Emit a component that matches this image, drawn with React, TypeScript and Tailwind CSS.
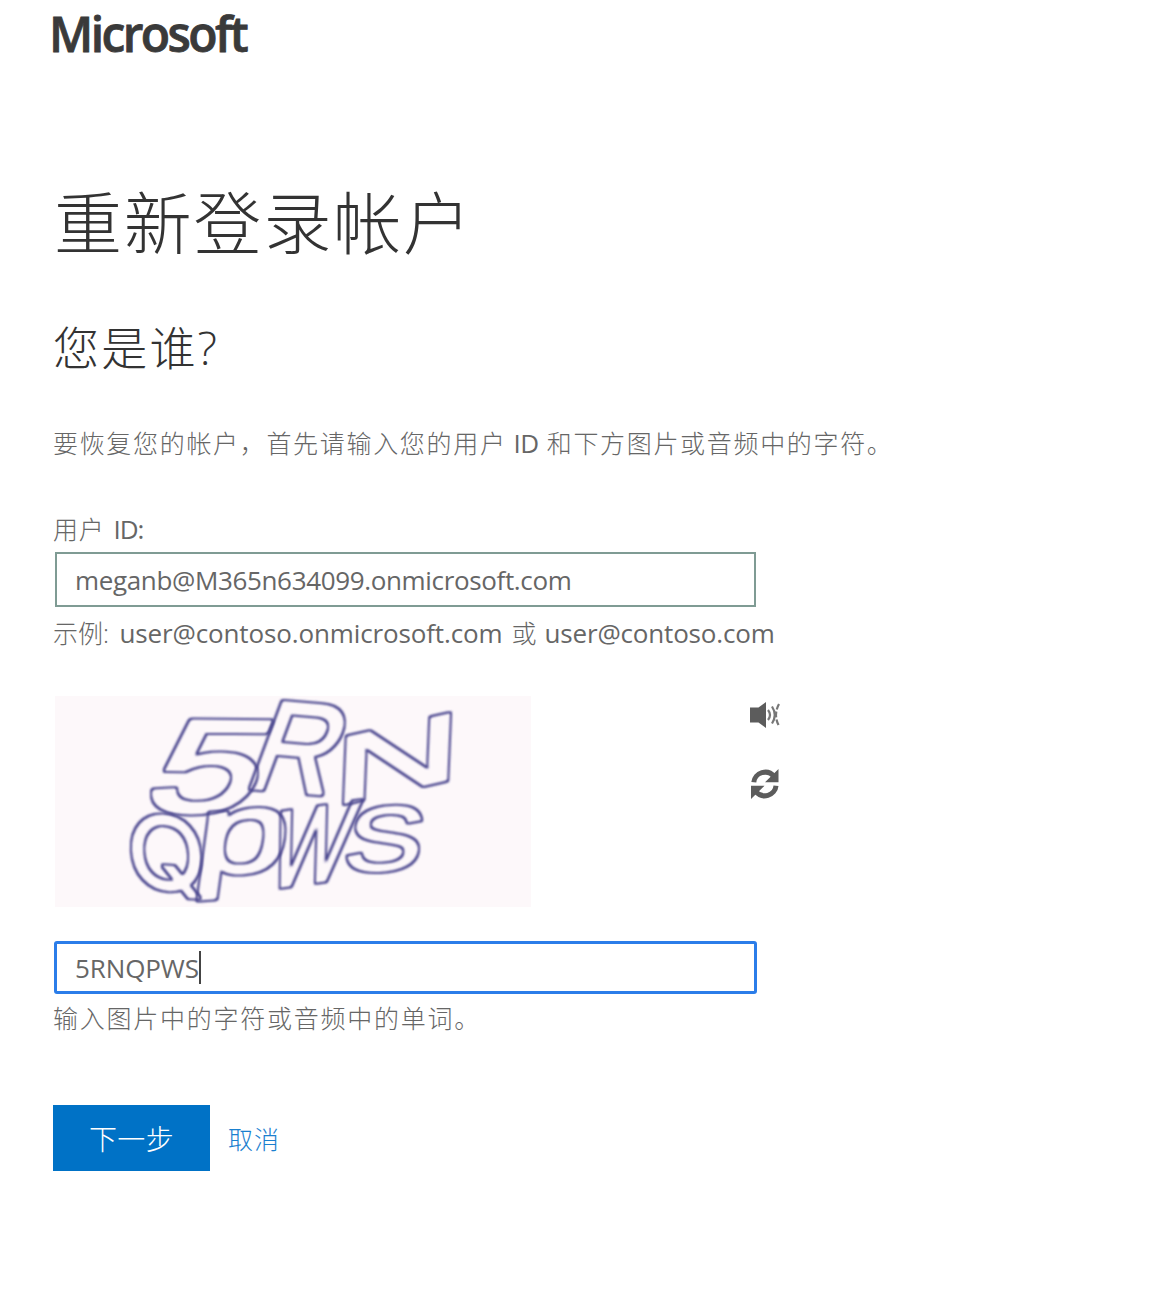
const glyphs = [
  { ch: "5", m: "matrix(1.96 .02 -.54 1.31 139 811)", f: "font-['Liberation_Sans',sans-serif]" },
  { ch: "R", m: "matrix(1.17 .1 -.46 1.24 242 787)", f: "font-['Liberation_Sans',sans-serif]" },
  { ch: "N", m: "matrix(1.76 -.4 -.04 .96 332 806)", f: "font-['Liberation_Sans',sans-serif]" },
  { ch: "Q", m: "matrix(1.03 .06 .06 1 129 887)", f: "font-['Inter',sans-serif]" },
  { ch: "p", m: "matrix(1.66 -.13 -.16 1.16 192 876)", f: "font-['Liberation_Sans',sans-serif]" },
  { ch: "W", m: "matrix(.84 -.12 -.26 1.11 264 889)", f: "font-['Liberation_Sans',sans-serif]" },
  { ch: "S", m: "matrix(1.17 -.05 -.15 .91 341 872)", f: "font-['Liberation_Sans',sans-serif]" },
];

function Captcha() {
  return (
    <svg viewBox="55 696 476 211" className="h-[211px] w-[476px] overflow-visible bg-[#fdf8fa]">
      <defs>
        {/* Turns a solid glyph into a rounded outline of even thickness. */}
        <filter id="outline" filterUnits="userSpaceOnUse" x="55" y="696" width="476" height="211">
          <feMorphology in="SourceAlpha" operator="dilate" radius="1" result="outer" />
          <feMorphology in="SourceAlpha" operator="erode" radius="1" result="inner" />
          <feComposite in="outer" in2="inner" operator="out" result="edge" />
          <feFlood floodColor="#46438c" />
          <feComposite in2="edge" operator="in" />
          <feGaussianBlur stdDeviation="0.8" />
        </filter>
      </defs>
      {glyphs.map((g) => (
        <g key={g.ch} filter="url(#outline)">
          <text
            transform={g.m}
            fontSize="100"
            fill="#4f4c91"
            stroke="#4f4c91"
            strokeWidth="4"
            strokeLinejoin="round"
            className={g.f}
          >
            {g.ch}
          </text>
        </g>
      ))}
    </svg>
  );
}

function Speaker() {
  return (
    <svg viewBox="0 0 30 26" className="h-[26px] w-[30px]" fill="none" stroke="#777" strokeWidth="2.2">
      <path d="M0 5.500h8.500L16 0v26l-7.500-5.500H0z" fill="#5c5c5c" stroke="none" />
      <path d="M18 8q4 5 0 10M22 4.500q5.500 8.500 0 17" />
      <path d="M29 2q-6 11 0 22" strokeDasharray="6 2" />
    </svg>
  );
}

function Refresh() {
  return (
    <svg viewBox="0 0 28 30" className="mr-px h-[30px] w-[28px]" fill="#5c5c5c">
      <path d="M27.500 0v13.300H14zM0 30V16.700h13.500z" />
      <path d="M2.800 13.300A11.300 11 0 0 1 23 7.500M25 16.700A11.300 11 0 0 1 4.800 22.500" fill="none" stroke="#5c5c5c" strokeWidth="5" />
    </svg>
  );
}

export default function App() {
  return (
    <main className="flex h-[1304px] w-[1153px] flex-col items-start overflow-hidden bg-white pl-[53px] font-['Open_Sans','Noto_Sans_CJK_SC',sans-serif] text-[26px] whitespace-nowrap text-[#666]">
      <div className="-ml-[4px] mt-[4px] h-[60px] text-[48px] leading-[60px] font-semibold tracking-[-2.6px] text-[#3a3a3a] [-webkit-text-stroke:0.8px_#3a3a3a]">
        Microsoft
      </div>
      <h1 className="mt-[109px] h-[100px] pl-[1px] text-[68px] leading-[100px] font-light tracking-[1.8px] text-[#333]">
        重新登录帐户
      </h1>
      <h2 className="mt-[39px] h-[70px] text-[46px] leading-[70px] font-light tracking-[2.2px] text-[#333]">
        您是谁?
      </h2>
      <p className="mt-[41px] h-[40px] text-[25px] leading-[40px] font-light tracking-[1.68px]">
        要恢复您的帐户，首先请输入您的用户
        <span className="mr-[8px] ml-[7px] text-[26px] font-normal tracking-[-0.5px]">ID</span>
        和下方图片或音频中的字符。
      </p>
      <label className="mt-[46px] h-[40px] text-[25px] leading-[40px] font-light tracking-[0.7px]">
        用户<span className="ml-[9px] text-[26px] font-normal tracking-[-1px]">ID:</span>
      </label>
      <input
        className="mt-[3px] ml-[2px] h-[55px] w-[701px] border-2 border-[#7f9b94] bg-white px-[18px] font-['Open_Sans','Noto_Sans',sans-serif] text-[26px] tracking-[-0.35px] outline-none"
        defaultValue="meganb@M365n634099.onmicrosoft.com"
      />
      <p className="mt-[6px] h-[40px] text-[25px] leading-[40px] font-light">
        示例: <span className="ml-[4px] text-[26px] font-normal tracking-[-0.13px]">user@contoso.onmicrosoft.com</span>
        <span className="mr-[8px] ml-[9px]">或</span>
        <span className="text-[26px] font-normal tracking-[-0.17px]">user@contoso.com</span>
      </p>
      <div className="mt-[43px] ml-[2px] flex h-[211px] w-[725px] justify-between">
        <Captcha />
        <div className="flex flex-col items-end gap-[41px] pt-[6px]">
          <Speaker />
          <Refresh />
        </div>
      </div>
      <div className="mt-[34px] ml-px flex h-[53px] w-[703px] items-center rounded-[3px] border-[3px] border-[#2b7de9] pl-[18px]">
        <span className="pt-px tracking-[-0.1px]">5RNQPWS</span>
        <span className="h-[33px] w-[2px] bg-[#444]" />
      </div>
      <p className="mt-[4px] h-[40px] text-[25px] leading-[40px] font-light tracking-[1.75px]">
        输入图片中的字符或音频中的单词。
      </p>
      <div className="mt-[67px] flex items-center">
        <button className="h-[66px] w-[157px] bg-[#0072c6] pt-[2px] text-[28px] font-light tracking-[0.3px] text-white">
          下一步
        </button>
        <a className="ml-[18px] pt-[4px] text-[25px] font-light tracking-[1px] text-[#1a80cf]">取消</a>
      </div>
    </main>
  );
}
